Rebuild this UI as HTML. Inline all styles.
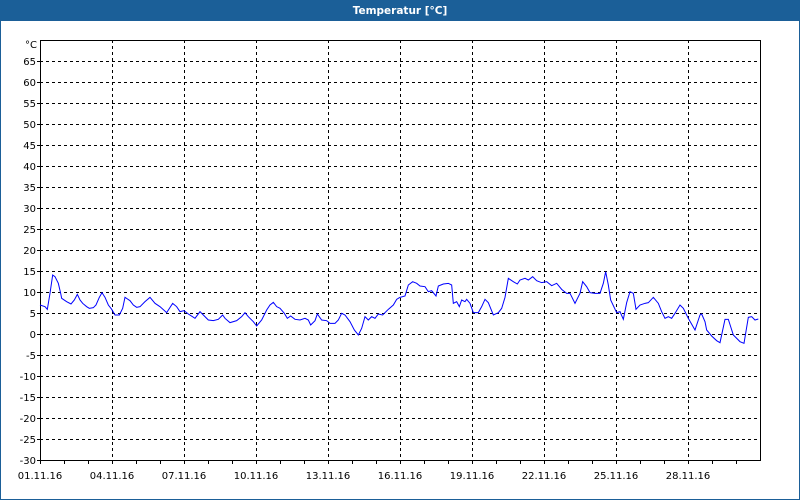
<!DOCTYPE html>
<html><head><meta charset="utf-8"><style>
html,body{margin:0;padding:0;width:800px;height:500px;overflow:hidden;background:#fff;font-family:Tahoma,"DejaVu Sans","Liberation Sans",sans-serif}
</style></head><body>
<svg width="800" height="500" xmlns="http://www.w3.org/2000/svg" style="display:block;font-family:'DejaVu Sans','Liberation Sans',sans-serif">
<rect x="0" y="0" width="800" height="500" fill="#fff"/>
<rect x="0" y="0" width="800" height="21" fill="#1b5f98"/>
<rect x="0" y="0" width="1" height="500" fill="#1b5f98"/>
<rect x="799" y="0" width="1" height="500" fill="#1b5f98"/>
<rect x="0" y="499" width="800" height="1" fill="#1b5f98"/>
<text x="400" y="14" fill="#fff" font-size="10.5" font-weight="bold" text-anchor="middle">Temperatur [°C]</text>
<g stroke="#000" stroke-width="1" stroke-dasharray="3,3" shape-rendering="crispEdges">
<path d="M40 61.5H760M40 82.5H760M40 103.5H760M40 124.5H760M40 145.5H760M40 166.5H760M40 187.5H760M40 208.5H760M40 229.5H760M40 250.5H760M40 271.5H760M40 292.5H760M40 313.5H760M40 334.5H760M40 355.5H760M40 376.5H760M40 397.5H760M40 418.5H760M40 439.5H760"/>
<path d="M112.5 40V460M184.5 40V460M256.5 40V460M328.5 40V460M400.5 40V460M472.5 40V460M544.5 40V460M616.5 40V460M688.5 40V460"/>
</g>
<g stroke="#000" stroke-width="1" fill="none" shape-rendering="crispEdges">
<rect x="40.5" y="40.5" width="720" height="420"/>
<path d="M37 61.5H40M37 82.5H40M37 103.5H40M37 124.5H40M37 145.5H40M37 166.5H40M37 187.5H40M37 208.5H40M37 229.5H40M37 250.5H40M37 271.5H40M37 292.5H40M37 313.5H40M37 334.5H40M37 355.5H40M37 376.5H40M37 397.5H40M37 418.5H40M37 439.5H40M37 460.5H40"/>
<path d="M40.5 460V464M64.5 460V464M88.5 460V464M112.5 460V464M136.5 460V464M160.5 460V464M184.5 460V464M208.5 460V464M232.5 460V464M256.5 460V464M280.5 460V464M304.5 460V464M328.5 460V464M352.5 460V464M376.5 460V464M400.5 460V464M424.5 460V464M448.5 460V464M472.5 460V464M496.5 460V464M520.5 460V464M544.5 460V464M568.5 460V464M592.5 460V464M616.5 460V464M640.5 460V464M664.5 460V464M688.5 460V464M712.5 460V464M736.5 460V464"/>
</g>
<g font-size="10" fill="#000" text-anchor="end">
<text x="37" y="48">°C</text>
<text x="36" y="65">65</text><text x="36" y="86">60</text><text x="36" y="107">55</text><text x="36" y="128">50</text>
<text x="36" y="149">45</text><text x="36" y="170">40</text><text x="36" y="191">35</text><text x="36" y="212">30</text>
<text x="36" y="233">25</text><text x="36" y="254">20</text><text x="36" y="275">15</text><text x="36" y="296">10</text>
<text x="36" y="317">5</text><text x="36" y="338">0</text><text x="36" y="359">-5</text><text x="36" y="380">-10</text>
<text x="36" y="401">-15</text><text x="36" y="422">-20</text><text x="36" y="443">-25</text><text x="36" y="464">-30</text>
</g>
<g font-size="10" fill="#000" text-anchor="middle">
<text x="40" y="479">01.11.16</text><text x="112" y="479">04.11.16</text><text x="184" y="479">07.11.16</text>
<text x="256" y="479">10.11.16</text><text x="328" y="479">13.11.16</text><text x="400" y="479">16.11.16</text>
<text x="472" y="479">19.11.16</text><text x="544" y="479">22.11.16</text><text x="616" y="479">25.11.16</text>
<text x="688" y="479">28.11.16</text>
</g>
<g fill="none" stroke="#0000ff" stroke-width="1">
<polyline transform="translate(40,260) scale(0.33333)" vector-effect="non-scaling-stroke" points="0,135 15,140 22,148 30,100 38,45 45,50 55,70 62,100 65,115 80,125 93,132 103,120 112,103 120,120 128,130 140,140 148,145 160,143 168,135 178,112 186,98 195,112 205,135 215,148 225,165 238,165 248,145 255,112 270,122 280,135 290,142 300,140 315,125 330,112 345,130 360,140 380,158 398,130 410,140 420,155 432,152 445,162 465,175 480,155 490,165 505,180 520,182 535,178 548,165 555,175 570,188 590,182 605,170 615,158 625,170 640,185 650,198 665,180 680,150 690,135 700,127 710,140 720,145 733,160 742,175 752,168 765,178 780,180 795,175 805,180 812,195 825,182 832,162 845,180 860,182 870,190 885,190 895,180 905,160 915,165 930,185 943,210 955,225 965,205 975,170 985,180 995,170 1005,175 1015,162 1028,165 1045,148 1060,135 1070,118 1080,112"/>
<polyline transform="translate(400,260) scale(0.33333)" vector-effect="non-scaling-stroke" points="0,112 15,108 25,75 38,65 50,70 60,78 75,80 85,95 95,92 108,108 115,78 130,72 145,70 155,75 160,130 170,125 178,140 185,120 195,125 200,118 210,130 220,158 235,158 245,140 255,118 265,128 280,165 295,158 305,145 315,112 325,55 340,65 352,72 360,60 375,55 385,60 398,50 410,62 425,68 440,65 455,77 470,70 485,88 500,100 510,100 525,130 540,100 548,65 560,80 570,98 585,100 600,100 610,70 617,35 625,75 632,120 650,158 660,155 670,178 680,128 690,95 700,100 708,148 720,135 735,130 745,128 760,112 775,130 785,155 795,175 805,170 815,175 825,160 840,135 850,145 865,175 885,210 900,165 905,162 915,185 920,210 935,228 950,242 960,248 975,178 985,178 1000,225 1020,245 1032,250 1045,172 1055,170 1065,180 1075,177"/>
</g>
</svg>
</body></html>
